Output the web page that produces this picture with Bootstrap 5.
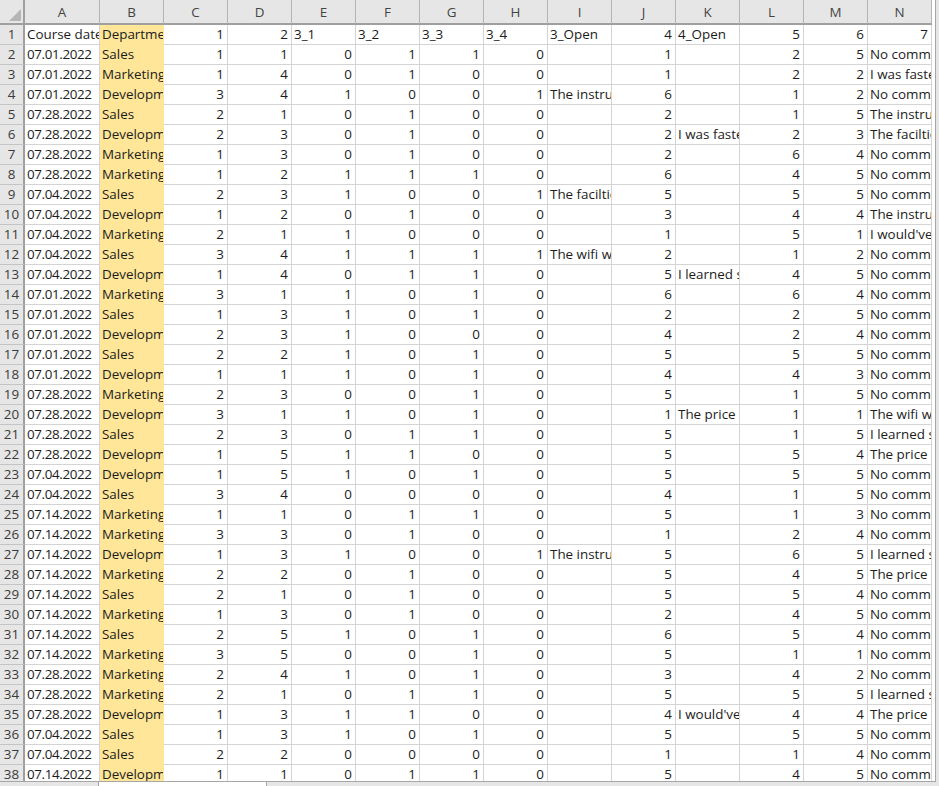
<!DOCTYPE html>
<html lang="en">
<head>
<meta charset="utf-8">
<title>Course survey</title>
<link href="https://cdn.jsdelivr.net/npm/bootstrap@5.3.0/dist/css/bootstrap.min.css" rel="stylesheet">
<style>
html,body{height:100%;margin:0;overflow:hidden}
body{background:#e6e6e6;font-family:"Open Sans","Noto Sans","Liberation Sans",sans-serif}
.sheet-wrap{width:936px;height:782px;overflow:hidden;background:#fff;border-right:1px solid #a6a6a6;border-bottom:1px solid #a6a6a6}
.sheet-grid.table{width:932px;table-layout:fixed;border-collapse:separate;border-spacing:0;margin:0;font-size:13.4px;line-height:19px;color:#1c1c1c}
.sheet-grid.table>:not(caption)>*>*{padding:0 2px;height:20px;border:0;border-right:1px solid #d4d4d4;border-bottom:1px solid #d4d4d4;box-shadow:none;white-space:nowrap;overflow:hidden;background:#fff;color:#1c1c1c;font-weight:400;vertical-align:middle}
.sheet-grid.table>thead>tr>th{height:24px;background:#e6e6e6;color:#444;text-align:center;border-right-color:#b4b4b4;border-bottom:2px solid #9f9f9f;padding:2px 0 0}
.sheet-grid.table>tbody>tr>th{background:#e6e6e6;color:#3a3a3a;text-align:center;border-bottom-color:#c4c4c4;border-right:2px solid #9f9f9f;padding:0}
.sheet-grid.table>tbody>tr>td.num{text-align:right;padding-right:3px}
.sheet-grid.table>tbody>tr>td.dept{background:#ffe699;border-right-color:#ffe699;border-bottom-color:#ffe699}
.sheet-grid.table>tbody>tr:not(:first-child)>td:nth-child(2){letter-spacing:-.38px}
.sheet-grid.table>thead>tr>th.corner{padding:0;border-right:2px solid #9f9f9f}
.corner svg{display:block;margin:0}
.w-head{width:25px}.w-a{width:75px}.w-n{width:64px}
.tab-strip{height:4px}
.strip-left{width:99px;border-right:1px solid #a6a6a6}
.strip-white{width:167px;background:#fff}
.strip-right{border-left:1px solid #a6a6a6}
</style>
</head>
<body>
<div class="sheet-wrap">
<table class="table sheet-grid">
<colgroup><col class="w-head"><col class="w-a"><col class="w-n"><col class="w-n"><col class="w-n"><col class="w-n"><col class="w-n"><col class="w-n"><col class="w-n"><col class="w-n"><col class="w-n"><col class="w-n"><col class="w-n"><col class="w-n"><col class="w-n"></colgroup>
<thead><tr><th class="corner"><svg width="23" height="23" viewBox="0 0 23 23"><polygon points="21,9 21,21 9,21" fill="#b5b5b5"/></svg></th><th>A</th><th>B</th><th>C</th><th>D</th><th>E</th><th>F</th><th>G</th><th>H</th><th>I</th><th>J</th><th>K</th><th>L</th><th>M</th><th>N</th></tr></thead>
<tbody>
<tr><th>1</th><td>Course date</td><td class="dept">Department</td><td class="num">1</td><td class="num">2</td><td>3_1</td><td>3_2</td><td>3_3</td><td>3_4</td><td>3_Open</td><td class="num">4</td><td>4_Open</td><td class="num">5</td><td class="num">6</td><td class="num">7</td></tr>
<tr><th>2</th><td>07.01.2022</td><td class="dept">Sales</td><td class="num">1</td><td class="num">1</td><td class="num">0</td><td class="num">1</td><td class="num">1</td><td class="num">0</td><td></td><td class="num">1</td><td></td><td class="num">2</td><td class="num">5</td><td>No comment</td></tr>
<tr><th>3</th><td>07.01.2022</td><td class="dept">Marketing</td><td class="num">1</td><td class="num">4</td><td class="num">0</td><td class="num">1</td><td class="num">0</td><td class="num">0</td><td></td><td class="num">1</td><td></td><td class="num">2</td><td class="num">2</td><td>I was faster</td></tr>
<tr><th>4</th><td>07.01.2022</td><td class="dept">Development</td><td class="num">3</td><td class="num">4</td><td class="num">1</td><td class="num">0</td><td class="num">0</td><td class="num">1</td><td>The instructor</td><td class="num">6</td><td></td><td class="num">1</td><td class="num">2</td><td>No comment</td></tr>
<tr><th>5</th><td>07.28.2022</td><td class="dept">Sales</td><td class="num">2</td><td class="num">1</td><td class="num">0</td><td class="num">1</td><td class="num">0</td><td class="num">0</td><td></td><td class="num">2</td><td></td><td class="num">1</td><td class="num">5</td><td>The instructor</td></tr>
<tr><th>6</th><td>07.28.2022</td><td class="dept">Development</td><td class="num">2</td><td class="num">3</td><td class="num">0</td><td class="num">1</td><td class="num">0</td><td class="num">0</td><td></td><td class="num">2</td><td>I was faster</td><td class="num">2</td><td class="num">3</td><td>The facilties</td></tr>
<tr><th>7</th><td>07.28.2022</td><td class="dept">Marketing</td><td class="num">1</td><td class="num">3</td><td class="num">0</td><td class="num">1</td><td class="num">0</td><td class="num">0</td><td></td><td class="num">2</td><td></td><td class="num">6</td><td class="num">4</td><td>No comment</td></tr>
<tr><th>8</th><td>07.28.2022</td><td class="dept">Marketing</td><td class="num">1</td><td class="num">2</td><td class="num">1</td><td class="num">1</td><td class="num">1</td><td class="num">0</td><td></td><td class="num">6</td><td></td><td class="num">4</td><td class="num">5</td><td>No comment</td></tr>
<tr><th>9</th><td>07.04.2022</td><td class="dept">Sales</td><td class="num">2</td><td class="num">3</td><td class="num">1</td><td class="num">0</td><td class="num">0</td><td class="num">1</td><td>The facilties</td><td class="num">5</td><td></td><td class="num">5</td><td class="num">5</td><td>No comment</td></tr>
<tr><th>10</th><td>07.04.2022</td><td class="dept">Development</td><td class="num">1</td><td class="num">2</td><td class="num">0</td><td class="num">1</td><td class="num">0</td><td class="num">0</td><td></td><td class="num">3</td><td></td><td class="num">4</td><td class="num">4</td><td>The instructor</td></tr>
<tr><th>11</th><td>07.04.2022</td><td class="dept">Marketing</td><td class="num">2</td><td class="num">1</td><td class="num">1</td><td class="num">0</td><td class="num">0</td><td class="num">0</td><td></td><td class="num">1</td><td></td><td class="num">5</td><td class="num">1</td><td>I would've</td></tr>
<tr><th>12</th><td>07.04.2022</td><td class="dept">Sales</td><td class="num">3</td><td class="num">4</td><td class="num">1</td><td class="num">1</td><td class="num">1</td><td class="num">1</td><td>The wifi was</td><td class="num">2</td><td></td><td class="num">1</td><td class="num">2</td><td>No comment</td></tr>
<tr><th>13</th><td>07.04.2022</td><td class="dept">Development</td><td class="num">1</td><td class="num">4</td><td class="num">0</td><td class="num">1</td><td class="num">1</td><td class="num">0</td><td></td><td class="num">5</td><td>I learned so</td><td class="num">4</td><td class="num">5</td><td>No comment</td></tr>
<tr><th>14</th><td>07.01.2022</td><td class="dept">Marketing</td><td class="num">3</td><td class="num">1</td><td class="num">1</td><td class="num">0</td><td class="num">1</td><td class="num">0</td><td></td><td class="num">6</td><td></td><td class="num">6</td><td class="num">4</td><td>No comment</td></tr>
<tr><th>15</th><td>07.01.2022</td><td class="dept">Sales</td><td class="num">1</td><td class="num">3</td><td class="num">1</td><td class="num">0</td><td class="num">1</td><td class="num">0</td><td></td><td class="num">2</td><td></td><td class="num">2</td><td class="num">5</td><td>No comment</td></tr>
<tr><th>16</th><td>07.01.2022</td><td class="dept">Development</td><td class="num">2</td><td class="num">3</td><td class="num">1</td><td class="num">0</td><td class="num">0</td><td class="num">0</td><td></td><td class="num">4</td><td></td><td class="num">2</td><td class="num">4</td><td>No comment</td></tr>
<tr><th>17</th><td>07.01.2022</td><td class="dept">Sales</td><td class="num">2</td><td class="num">2</td><td class="num">1</td><td class="num">0</td><td class="num">1</td><td class="num">0</td><td></td><td class="num">5</td><td></td><td class="num">5</td><td class="num">5</td><td>No comment</td></tr>
<tr><th>18</th><td>07.01.2022</td><td class="dept">Development</td><td class="num">1</td><td class="num">1</td><td class="num">1</td><td class="num">0</td><td class="num">1</td><td class="num">0</td><td></td><td class="num">4</td><td></td><td class="num">4</td><td class="num">3</td><td>No comment</td></tr>
<tr><th>19</th><td>07.28.2022</td><td class="dept">Marketing</td><td class="num">2</td><td class="num">3</td><td class="num">0</td><td class="num">0</td><td class="num">1</td><td class="num">0</td><td></td><td class="num">5</td><td></td><td class="num">1</td><td class="num">5</td><td>No comment</td></tr>
<tr><th>20</th><td>07.28.2022</td><td class="dept">Development</td><td class="num">3</td><td class="num">1</td><td class="num">1</td><td class="num">0</td><td class="num">1</td><td class="num">0</td><td></td><td class="num">1</td><td>The price</td><td class="num">1</td><td class="num">1</td><td>The wifi was</td></tr>
<tr><th>21</th><td>07.28.2022</td><td class="dept">Sales</td><td class="num">2</td><td class="num">3</td><td class="num">0</td><td class="num">1</td><td class="num">1</td><td class="num">0</td><td></td><td class="num">5</td><td></td><td class="num">1</td><td class="num">5</td><td>I learned so</td></tr>
<tr><th>22</th><td>07.28.2022</td><td class="dept">Development</td><td class="num">1</td><td class="num">5</td><td class="num">1</td><td class="num">1</td><td class="num">0</td><td class="num">0</td><td></td><td class="num">5</td><td></td><td class="num">5</td><td class="num">4</td><td>The price</td></tr>
<tr><th>23</th><td>07.04.2022</td><td class="dept">Development</td><td class="num">1</td><td class="num">5</td><td class="num">1</td><td class="num">0</td><td class="num">1</td><td class="num">0</td><td></td><td class="num">5</td><td></td><td class="num">5</td><td class="num">5</td><td>No comment</td></tr>
<tr><th>24</th><td>07.04.2022</td><td class="dept">Sales</td><td class="num">3</td><td class="num">4</td><td class="num">0</td><td class="num">0</td><td class="num">0</td><td class="num">0</td><td></td><td class="num">4</td><td></td><td class="num">1</td><td class="num">5</td><td>No comment</td></tr>
<tr><th>25</th><td>07.14.2022</td><td class="dept">Marketing</td><td class="num">1</td><td class="num">1</td><td class="num">0</td><td class="num">1</td><td class="num">1</td><td class="num">0</td><td></td><td class="num">5</td><td></td><td class="num">1</td><td class="num">3</td><td>No comment</td></tr>
<tr><th>26</th><td>07.14.2022</td><td class="dept">Marketing</td><td class="num">3</td><td class="num">3</td><td class="num">0</td><td class="num">1</td><td class="num">0</td><td class="num">0</td><td></td><td class="num">1</td><td></td><td class="num">2</td><td class="num">4</td><td>No comment</td></tr>
<tr><th>27</th><td>07.14.2022</td><td class="dept">Development</td><td class="num">1</td><td class="num">3</td><td class="num">1</td><td class="num">0</td><td class="num">0</td><td class="num">1</td><td>The instructor</td><td class="num">5</td><td></td><td class="num">6</td><td class="num">5</td><td>I learned so</td></tr>
<tr><th>28</th><td>07.14.2022</td><td class="dept">Marketing</td><td class="num">2</td><td class="num">2</td><td class="num">0</td><td class="num">1</td><td class="num">0</td><td class="num">0</td><td></td><td class="num">5</td><td></td><td class="num">4</td><td class="num">5</td><td>The price</td></tr>
<tr><th>29</th><td>07.14.2022</td><td class="dept">Sales</td><td class="num">2</td><td class="num">1</td><td class="num">0</td><td class="num">1</td><td class="num">0</td><td class="num">0</td><td></td><td class="num">5</td><td></td><td class="num">5</td><td class="num">4</td><td>No comment</td></tr>
<tr><th>30</th><td>07.14.2022</td><td class="dept">Marketing</td><td class="num">1</td><td class="num">3</td><td class="num">0</td><td class="num">1</td><td class="num">0</td><td class="num">0</td><td></td><td class="num">2</td><td></td><td class="num">4</td><td class="num">5</td><td>No comment</td></tr>
<tr><th>31</th><td>07.14.2022</td><td class="dept">Sales</td><td class="num">2</td><td class="num">5</td><td class="num">1</td><td class="num">0</td><td class="num">1</td><td class="num">0</td><td></td><td class="num">6</td><td></td><td class="num">5</td><td class="num">4</td><td>No comment</td></tr>
<tr><th>32</th><td>07.14.2022</td><td class="dept">Marketing</td><td class="num">3</td><td class="num">5</td><td class="num">0</td><td class="num">0</td><td class="num">1</td><td class="num">0</td><td></td><td class="num">5</td><td></td><td class="num">1</td><td class="num">1</td><td>No comment</td></tr>
<tr><th>33</th><td>07.28.2022</td><td class="dept">Marketing</td><td class="num">2</td><td class="num">4</td><td class="num">1</td><td class="num">0</td><td class="num">1</td><td class="num">0</td><td></td><td class="num">3</td><td></td><td class="num">4</td><td class="num">2</td><td>No comment</td></tr>
<tr><th>34</th><td>07.28.2022</td><td class="dept">Marketing</td><td class="num">2</td><td class="num">1</td><td class="num">0</td><td class="num">1</td><td class="num">1</td><td class="num">0</td><td></td><td class="num">5</td><td></td><td class="num">5</td><td class="num">5</td><td>I learned so</td></tr>
<tr><th>35</th><td>07.28.2022</td><td class="dept">Development</td><td class="num">1</td><td class="num">3</td><td class="num">1</td><td class="num">1</td><td class="num">0</td><td class="num">0</td><td></td><td class="num">4</td><td>I would've</td><td class="num">4</td><td class="num">4</td><td>The price</td></tr>
<tr><th>36</th><td>07.04.2022</td><td class="dept">Sales</td><td class="num">1</td><td class="num">3</td><td class="num">1</td><td class="num">0</td><td class="num">1</td><td class="num">0</td><td></td><td class="num">5</td><td></td><td class="num">5</td><td class="num">5</td><td>No comment</td></tr>
<tr><th>37</th><td>07.04.2022</td><td class="dept">Sales</td><td class="num">2</td><td class="num">2</td><td class="num">0</td><td class="num">0</td><td class="num">0</td><td class="num">0</td><td></td><td class="num">1</td><td></td><td class="num">1</td><td class="num">4</td><td>No comment</td></tr>
<tr><th>38</th><td>07.14.2022</td><td class="dept">Development</td><td class="num">1</td><td class="num">1</td><td class="num">0</td><td class="num">1</td><td class="num">1</td><td class="num">0</td><td></td><td class="num">5</td><td></td><td class="num">4</td><td class="num">5</td><td>No comment</td></tr>
</tbody>
</table>
</div>
<div class="d-flex tab-strip">
<div class="strip-left"></div>
<div class="strip-white"></div>
<div class="strip-right flex-grow-1"></div>
</div>
</body>
</html>
